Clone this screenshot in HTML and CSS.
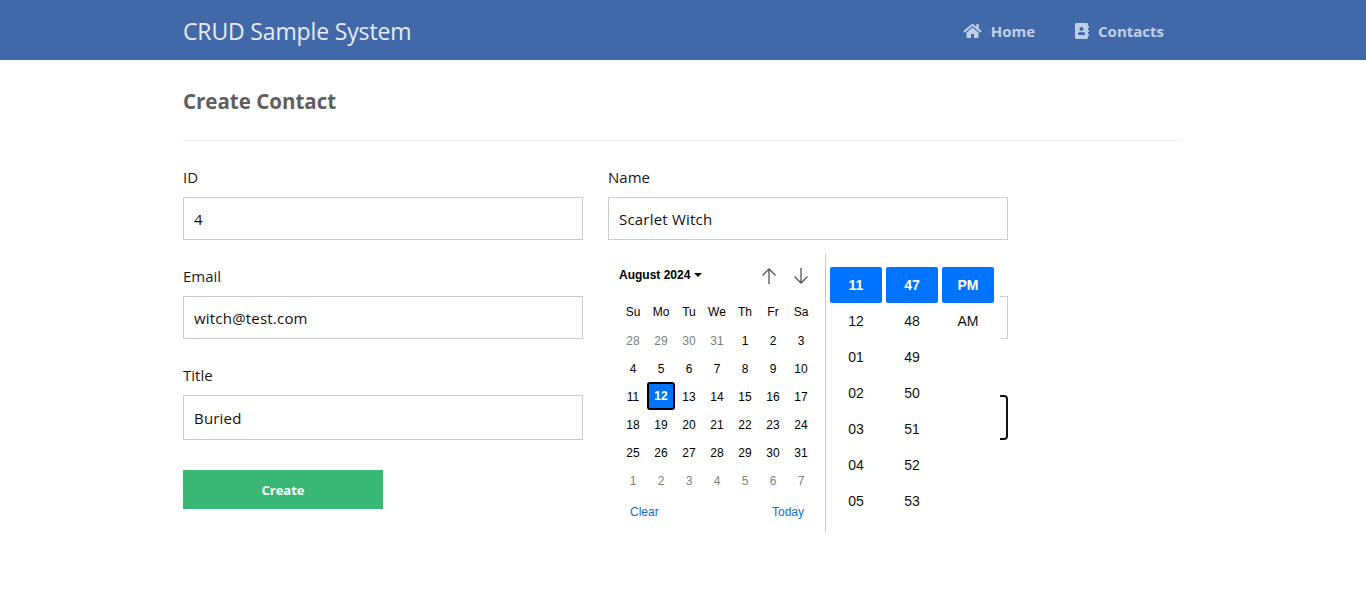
FILE: index.html
```html
<!DOCTYPE html>
<html lang="en">
<head>
	<meta charset="UTF-8">
	<title>Create Contact</title>
	<link rel="stylesheet" href="styles.css">
</head>
<body>
	<nav class="navbar">
		<div class="container navbar-inner">
			<a class="brand" href="#">CRUD Sample System</a>
			<ul class="nav-links">
				<li><a href="#"><svg class="nav-icon home-icon" viewBox="0 0 576 512"><path d="M280.37 148.26L96 300.11V464a16 16 0 0 0 16 16l112.06-.29a16 16 0 0 0 15.92-16V368a16 16 0 0 1 16-16h64a16 16 0 0 1 16 16v95.64a16 16 0 0 0 16 16.05L464 480a16 16 0 0 0 16-16V300L295.67 148.26a12.19 12.19 0 0 0-15.3 0zM571.6 251.47L488 182.56V44.05a12 12 0 0 0-12-12h-56a12 12 0 0 0-12 12v72.61L318.47 43a48 48 0 0 0-61 0L4.34 251.47a12 12 0 0 0-1.6 16.9l25.5 31A12 12 0 0 0 45.15 301l235.22-193.74a12.19 12.19 0 0 1 15.3 0L530.9 301a12 12 0 0 0 16.9-1.6l25.5-31a12 12 0 0 0-1.7-16.93z"/></svg>Home</a></li>
				<li><a href="#"><svg class="nav-icon book-icon" viewBox="0 0 448 512"><path d="M436 160c6.6 0 12-5.4 12-12v-40c0-6.6-5.4-12-12-12h-20V48c0-26.5-21.5-48-48-48H48C21.5 0 0 21.5 0 48v416c0 26.5 21.5 48 48 48h320c26.5 0 48-21.5 48-48v-48h20c6.6 0 12-5.4 12-12v-40c0-6.6-5.4-12-12-12h-20v-64h20c6.6 0 12-5.4 12-12v-40c0-6.6-5.4-12-12-12h-20v-64h20zm-228-32c35.3 0 64 28.7 64 64s-28.7 64-64 64-64-28.7-64-64 28.7-64 64-64zm112 236.8c0 10.6-10 19.2-22.4 19.2H118.4C106 384 96 375.4 96 364.8v-19.2c0-31.8 30.1-57.6 67.2-57.6h5c12.3 5.1 25.7 8 39.8 8s27.6-2.9 39.8-8h5c37.1 0 67.2 25.8 67.2 57.6v19.2z"/></svg>Contacts</a></li>
			</ul>
		</div>
	</nav>

	<main class="container">
		<h1 class="page-title">Create Contact</h1>
		<hr class="divider">

		<form class="contact-form">
			<div class="field">
				<label>ID</label>
				<input class="text-input" type="text" value="4">
			</div>
			<div class="field">
				<label>Name</label>
				<input class="text-input" type="text" value="Scarlet Witch">
			</div>
			<div class="field">
				<label>Email</label>
				<input class="text-input" type="text" value="witch@test.com">
			</div>
			<div class="field">
				<label></label>
				<input class="text-input" type="text">
			</div>
			<div class="field">
				<label>Title</label>
				<input class="text-input tall" type="text" value="Buried">
			</div>
			<div class="field">
				<label></label>
				<input class="text-input tall focused" type="text">
			</div>
			<div class="field">
				<button class="create-btn" type="button">Create</button>
			</div>

			<div class="picker">
				<div class="calendar">
					<div class="cal-head">
						<span class="cal-month">August 2024<i class="caret"></i></span>
						<span class="cal-arrows">
							<svg viewBox="0 0 18 18"><path d="M9 17V2M2.5 8.5L9 2l6.500 6.500"/></svg>
							<svg viewBox="0 0 18 18"><path d="M9 1v15M2.500 9.500L9 16l6.500-6.500"/></svg>
						</span>
					</div>
					<div class="cal-grid">
						<b>Su</b><b>Mo</b><b>Tu</b><b>We</b><b>Th</b><b>Fr</b><b>Sa</b>
						<span class="off">28</span><span class="off">29</span><span class="off">30</span><span class="off">31</span><span>1</span><span>2</span><span>3</span>
						<span>4</span><span>5</span><span>6</span><span>7</span><span>8</span><span>9</span><span>10</span>
						<span>11</span><span class="picked">12</span><span>13</span><span>14</span><span>15</span><span>16</span><span>17</span>
						<span>18</span><span>19</span><span>20</span><span>21</span><span>22</span><span>23</span><span>24</span>
						<span>25</span><span>26</span><span>27</span><span>28</span><span>29</span><span>30</span><span>31</span>
						<span class="off">1</span><span class="off">2</span><span class="off">3</span><span class="off">4</span><span class="off">5</span><span class="off">6</span><span class="off">7</span>
					</div>
					<div class="cal-foot">
						<a href="#">Clear</a>
						<a href="#">Today</a>
					</div>
				</div>
				<div class="time">
					<ul>
						<li class="active">11</li><li>12</li><li>01</li><li>02</li><li>03</li><li>04</li><li>05</li>
					</ul>
					<ul>
						<li class="active">47</li><li>48</li><li>49</li><li>50</li><li>51</li><li>52</li><li>53</li>
					</ul>
					<ul>
						<li class="active">PM</li><li>AM</li>
					</ul>
				</div>
			</div>
		</form>
	</main>
</body>
</html>
```

FILE: styles.css
```css
* { box-sizing: border-box; padding: 0; margin: 0; }
body { font-family: "Open Sans", "Noto Sans", sans-serif; color: #111; background: #fff; }
ul { list-style: none; }
a { text-decoration: none; }

.container { width: 1000px; margin-left: 183px; }

.navbar { height: 60px; background: #4169a9; }
.navbar-inner { height: 60px; display: flex; align-items: center; justify-content: space-between; }
.brand { font-size: 23px; line-height: 30px; padding-top: 1px; color: #e6ecf6; letter-spacing: -0.15px; }
.nav-links { display: flex; gap: 40px; padding: 2px 19px 0 0; }
.nav-links a { display: flex; align-items: center; font-size: 15px; font-weight: 700; line-height: 22px; color: #c1cfe6; }
.nav-icon { height: 16px; fill: #c1cfe6; margin-right: 9px; }
.home-icon { width: 19px; }
.book-icon { width: 14px; }

.page-title { font-size: 20.500px; font-weight: 700; line-height: 28px; color: #5f5f5f; padding-top: 27px; }
.divider { border: 0; border-top: 1px solid #eee; margin-top: 25px; }

.contact-form { position: relative; display: grid; grid-template-columns: 400px 400px; column-gap: 25px; padding-top: 25px; }
.field { margin-bottom: 25px; }
.field label { display: block; font-size: 15px; line-height: 22px; height: 31px; color: #1a1a1a; }
.text-input { display: block; width: 100%; height: 43px; padding: 0 10px; font: 15px "Open Sans", "Noto Sans", sans-serif; letter-spacing: 0.2px; color: #111; border: 1px solid #ccc; background: #fff; outline: 0; }
.text-input.tall { height: 45px; }
.text-input.focused { border: 2px solid #111; border-radius: 4px; }

.create-btn { display: block; width: 200px; height: 39px; margin-top: 5px; border: 0; background: #38b775; color: #fff; font: 700 13px "Open Sans", "Noto Sans", sans-serif; }

/* date + time popup, lies over the form */
.picker { position: absolute; left: 425px; top: 112px; width: 392px; height: 279px; display: flex; background: #fff; font-family: "Liberation Sans", Arial, sans-serif; color: #000; }
.calendar { width: 218px; padding-left: 11px; border-right: 1px solid #ccc; }
.cal-head { display: flex; justify-content: space-between; align-items: center; height: 45px; padding-right: 15px; padding-top: 1px; }
.cal-month { font-size: 12px; font-weight: 700; margin-top: -3px; }
.caret { display: inline-block; margin-left: 4px; vertical-align: 2px; border: 4px solid transparent; border-top-color: #000; border-bottom: 0; }
.cal-arrows { display: flex; gap: 14px; }
.cal-arrows svg { width: 18px; height: 18px; fill: none; stroke: #555; stroke-width: 1.3; }
.cal-grid { display: grid; grid-template-columns: repeat(7, 28px); grid-template-rows: 28px repeat(6, 28px); text-align: center; font-size: 12px; line-height: 28px; }
.cal-grid b { font-weight: 400; }
.cal-grid span { line-height: 30px; }
.cal-grid .off { color: #808080; }
.cal-grid .picked { background: #0073ff; color: #fff; font-weight: 700; border: 2px solid #000; border-radius: 3px; line-height: 24px; }
.cal-foot { display: flex; justify-content: space-between; padding: 9px 21px 0 11px; font-size: 12px; line-height: 18px; }
.cal-foot a { color: #0f6fd6; }

.time { display: flex; gap: 4px; height: 279px; padding: 14px 0 0 4px; overflow: hidden; }
.time ul { width: 52px; }
.time li { height: 36px; line-height: 36px; text-align: center; font-size: 14px; color: #111; }
.time .active { background: #0073ff; color: #fff; font-weight: 700; border-radius: 2px; }
```
